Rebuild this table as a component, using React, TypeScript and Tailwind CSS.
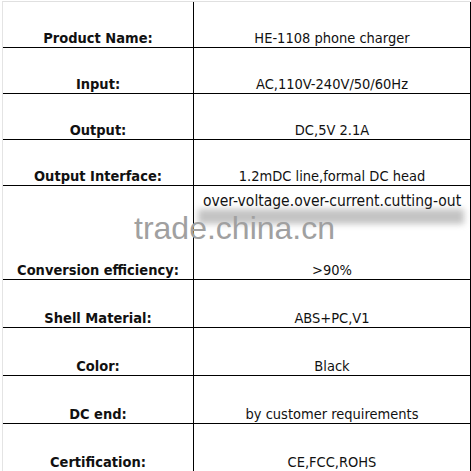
import React from "react";

const rows: { label: string; value: string; h: string; top?: boolean }[] = [
  { label: "Product Name:", value: "HE-1108 phone charger", h: "h-[46px]" },
  { label: "Input:", value: "AC,110V-240V/50/60Hz", h: "h-[46px]" },
  { label: "Output:", value: "DC,5V 2.1A", h: "h-[46px]" },
  { label: "Output Interface:", value: "1.2mDC line,formal DC head", h: "h-[46px]" },
  { label: "Conversion efficiency:", value: "over-voltage.over-current.cutting-out", h: "h-[94px]", top: true },
  { label: "Shell Material:", value: "ABS+PC,V1", h: "h-[48px]" },
  { label: "Color:", value: "Black", h: "h-[48px]" },
  { label: "DC end:", value: "by customer requirements", h: "h-[48px]" },
  { label: "Certification:", value: "CE,FCC,ROHS", h: "h-[48px]" },
];

export default function App() {
  return (
    <div className="relative w-[471px] h-[471px] bg-white overflow-hidden text-[#111] font-['DejaVu_Sans_Condensed','DejaVu_Sans',sans-serif]">
      <div className="w-[470px] border-l border-t border-l-[#e4e4e4] border-t-[#e0e0e0] mt-px ml-[2px]">
        {rows.map((r, i) => (
          <div key={i} className={`flex ${r.h} border-b border-black`}>
            <div className="w-[191px] shrink-0 border-r border-black flex items-end justify-center pb-[2px]">
              <span className="text-[14.5px] font-bold leading-none">{r.label}</span>
            </div>
            <div className="flex-1 border-r-2 border-black flex flex-col justify-end items-center pb-[2px]">
              {r.top ? (
                <div className="flex flex-col h-full w-full items-center">
                  <span className="text-[15.5px] leading-none mt-[8px] whitespace-nowrap">{r.value}</span>
                  <span className="text-[14.5px] leading-none mt-auto">&gt;90%</span>
                </div>
              ) : (
                <span className="text-[14.5px] leading-none whitespace-nowrap">{r.value}</span>
              )}
            </div>
          </div>
        ))}
      </div>

      {/* watermark */}
      <div className="absolute left-[198px] top-[209px] w-[266px] h-[15px] bg-[#7a7a7a]/45 blur-[3px]" />
      <div className="absolute left-[134px] top-[212px] text-[32px] leading-none text-[#a0a0a0] font-['Liberation_Sans',Arial,sans-serif]">
        trade.china.cn
      </div>
    </div>
  );
}
